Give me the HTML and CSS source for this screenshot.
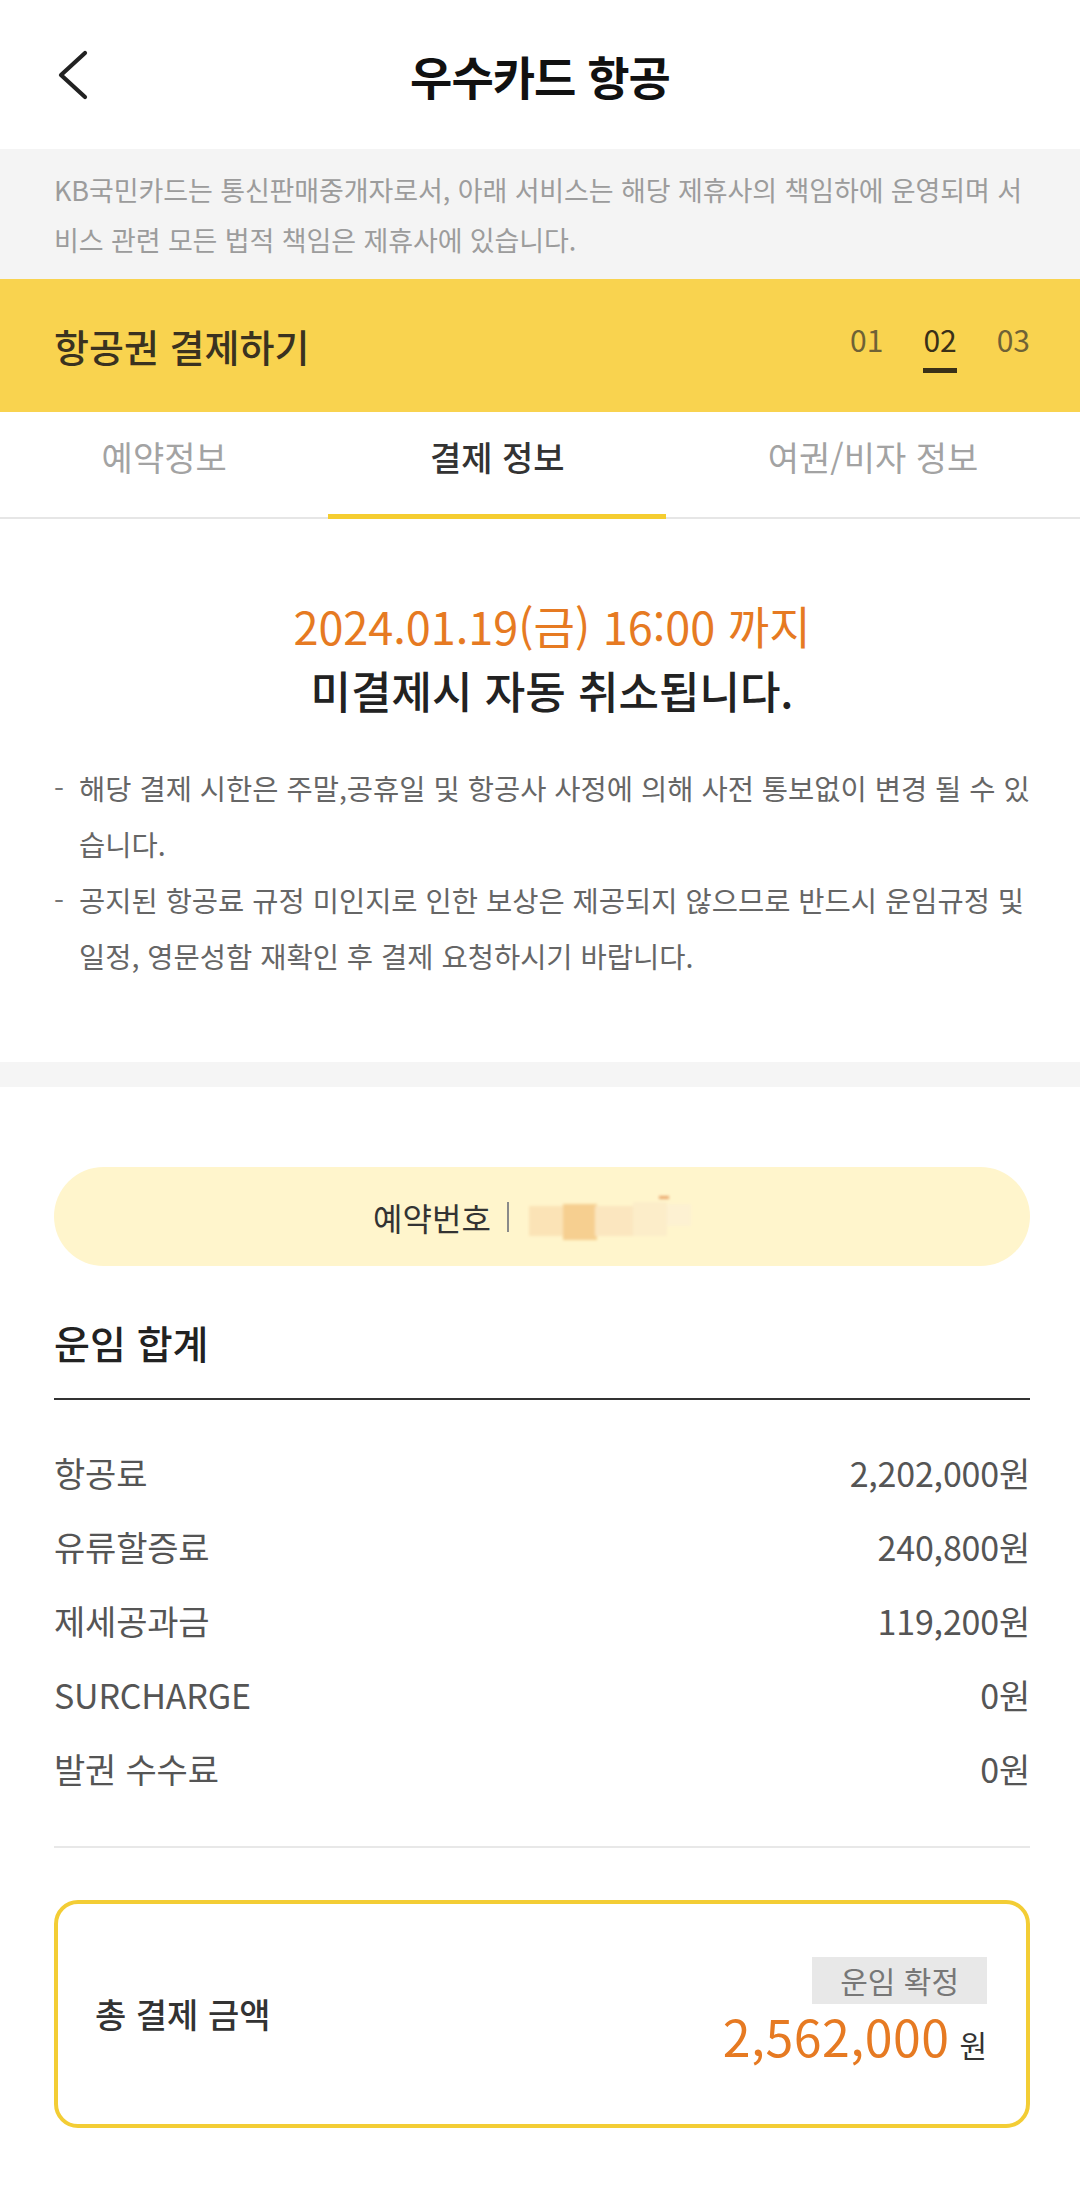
FILE: index.html
```html
<!DOCTYPE html>
<html lang="ko">
<head>
<meta charset="utf-8">
<title>우수카드 항공</title>
<link rel="stylesheet" href="styles.css">
</head>
<body>
<div class="page">
  <header class="topbar">
    <div class="back" aria-label="뒤로">
      <svg width="34" height="54" viewBox="0 0 34 54"><polyline points="29,5 5,27 29,49" fill="none" stroke="#222" stroke-width="4.2" stroke-linecap="round" stroke-linejoin="round"/></svg>
    </div>
    <h1 class="title">우수카드 항공</h1>
    <div class="spacer"></div>
  </header>

  <div class="notice">KB국민카드는 통신판매중개자로서, 아래 서비스는 해당 제휴사의 책임하에 운영되며 서<br>비스 관련 모든 법적 책임은 제휴사에 있습니다.</div>

  <div class="stepbar">
    <h2 class="step-title">항공권 결제하기</h2>
    <ol class="steps">
      <li>01</li>
      <li class="on">02</li>
      <li>03</li>
    </ol>
  </div>

  <nav class="tabs">
    <a class="tab">예약정보</a>
    <a class="tab active">결제 정보</a>
    <a class="tab">여권/비자 정보</a>
  </nav>

  <section class="deadline">
    <p class="dl-date">2024.01.19(금) 16:00 까지</p>
    <p class="dl-msg">미결제시 자동 취소됩니다.</p>
    <ul class="dl-notes">
      <li><span>해당 결제 시한은 주말,공휴일 및 항공사 사정에 의해 사전 통보없이 변경 될 수 있<br>습니다.</span></li>
      <li><span>공지된 항공료 규정 미인지로 인한 보상은 제공되지 않으므로 반드시 운임규정 및<br>일정, 영문성함 재확인 후 결제 요청하시기 바랍니다.</span></li>
    </ul>
  </section>

  <section class="fare">
    <div class="booking">
      <span class="booking-label">예약번호</span>
      <span class="booking-sep"></span>
      <svg class="booking-no" width="190" height="56" viewBox="0 0 190 56">
        <defs><filter id="bl" x="-20%" y="-40%" width="140%" height="180%"><feGaussianBlur stdDeviation="1.6"/></filter></defs>
        <g filter="url(#bl)">
          <rect x="2" y="14" width="36" height="30" fill="#fbe3b6"/>
          <rect x="36" y="12" width="34" height="36" fill="#f6cf90"/>
          <rect x="68" y="14" width="40" height="30" fill="#fbe6bf"/>
          <rect x="106" y="10" width="34" height="34" fill="#fcedc9"/>
          <rect x="132" y="4" width="10" height="3" fill="#e9a56a"/>
          <rect x="140" y="12" width="24" height="22" fill="#fdf1d2"/>
        </g>
      </svg>
    </div>

    <h3 class="fare-title">운임 합계</h3>

    <dl class="fare-list">
      <div class="row"><dt>항공료</dt><dd>2,202,000원</dd></div>
      <div class="row"><dt>유류할증료</dt><dd>240,800원</dd></div>
      <div class="row"><dt>제세공과금</dt><dd>119,200원</dd></div>
      <div class="row"><dt>SURCHARGE</dt><dd>0원</dd></div>
      <div class="row"><dt>발권 수수료</dt><dd>0원</dd></div>
    </dl>

    <div class="total">
      <span class="total-label">총 결제 금액</span>
      <div class="total-right">
        <span class="badge">운임 확정</span>
        <p class="amount"><span class="amount-num">2,562,000</span><span class="amount-unit">원</span></p>
      </div>
    </div>
  </section>
</div>
</body>
</html>
```

FILE: styles.css
```css
* { box-sizing: border-box; }

html, body {
  margin: 0;
  padding: 0;
  background: #ffffff;
}

body {
  font-family: "Noto Sans CJK KR", "Noto Sans", sans-serif;
  color: #222;
}

.page {
  width: 1080px;
}

p, h1, h2, h3, ul, ol, dl, dd { margin: 0; padding: 0; }

/* top bar */
.topbar {
  height: 149px;
  display: grid;
  grid-template-columns: 1fr auto 1fr;
  align-items: center;
}

.back {
  padding-left: 56px;
  display: flex;
  align-items: center;
}

.back svg { display: block; }

.title {
  font-size: 46px;
  font-weight: 700;
  color: #111;
  line-height: 60px;
  letter-spacing: -1px;
}

/* notice */
.notice {
  background: #f4f4f4;
  padding: 16px 30px 14px 54px;
  font-size: 27px;
  line-height: 50px;
  color: #9c9c9c;
  letter-spacing: -0.1px;
  white-space: nowrap;
}

/* step bar */
.stepbar {
  height: 133px;
  background: #f9d34f;
  display: flex;
  align-items: center;
  justify-content: space-between;
  padding: 0 50px 0 54px;
}

.step-title {
  font-size: 38px;
  font-weight: 500;
  color: #3a3220;
  line-height: 46px;
  letter-spacing: 0;
}

.steps {
  list-style: none;
  display: flex;
  gap: 40px;
  align-items: flex-start;
  margin-top: 6px;
}

.steps li {
  font-size: 30px;
  line-height: 30px;
  color: #6f6236;
  padding-bottom: 14px;
  border-bottom: 5px solid transparent;
}

.steps li.on {
  color: #3a3018;
  border-bottom-color: #3a3018;
}

/* tabs */
.tabs {
  display: flex;
  box-shadow: inset 0 -2px 0 #e6e6e6;
}

.tab {
  flex: 1 1 auto;
  text-align: center;
  height: 107px;
  padding-top: 22px;
  font-size: 34px;
  line-height: 46px;
  color: #a3a3a3;
  border-bottom: 5px solid transparent;
}

.tab.active {
  color: #333;
  font-weight: 500;
  border-bottom-color: #f5cd30;
}

/* deadline */
.deadline {
  padding: 75px 30px 78px 54px;
}

.dl-date,
.dl-msg {
  text-align: center;
  line-height: 64px;
}

.dl-date {
  color: #e67a22;
  font-size: 45px;
}

.dl-msg {
  color: #222;
  font-weight: 500;
  font-size: 44px;
}

.dl-notes {
  list-style: none;
  margin-top: 38px;
}

.dl-notes li {
  display: flex;
  font-size: 28.5px;
  line-height: 56px;
  color: #666;
  letter-spacing: 0;
  white-space: nowrap;
}

.dl-notes li::before {
  content: "-";
  flex: 0 0 25px;
  color: #777;
}

/* fare */
.fare {
  border-top: 25px solid #f5f5f5;
  padding: 80px 50px 0 54px;
}

.booking {
  height: 99px;
  border-radius: 50px;
  background: #fff5cc;
  display: flex;
  align-items: center;
  justify-content: center;
  padding-left: 6px;
}

.booking-label {
  font-size: 32px;
  line-height: 40px;
  color: #333;
}

.booking-sep {
  width: 2px;
  height: 30px;
  background: #8a8a8a;
  margin: 0 18px 0 16px;
}

.booking-no {
  display: block;
  margin-top: 6px;
}

.fare-title {
  margin-top: 51px;
  font-size: 39px;
  font-weight: 500;
  line-height: 50px;
  color: #222;
  padding-bottom: 31px;
  border-bottom: 2px solid #333;
}

.fare-list {
  margin-top: 36px;
  padding-bottom: 40px;
  border-bottom: 2px solid #e8e8e8;
}

.row {
  display: flex;
  justify-content: space-between;
  font-size: 34px;
  line-height: 74px;
  color: #555;
  letter-spacing: -0.2px;
}

.row dd { margin: 0; }

/* total */
.total {
  margin-top: 52px;
  height: 228px;
  border: 4px solid #f3cd35;
  border-radius: 24px;
  display: flex;
  align-items: center;
  justify-content: space-between;
  padding: 0 39px 0 37px;
}

.total-label {
  font-size: 34px;
  line-height: 44px;
  color: #333;
  font-weight: 500;
}

.total-right {
  display: flex;
  flex-direction: column;
  align-items: flex-end;
  margin-top: 4px;
}

.badge {
  display: block;
  height: 47px;
  line-height: 47px;
  padding: 0 28px;
  background: #e8e8e8;
  color: #777;
  font-size: 30px;
}

.amount {
  display: flex;
  align-items: baseline;
  line-height: 62px;
}

.amount-num {
  font-size: 50px;
  color: #e67a22;
  letter-spacing: 0.5px;
}

.amount-unit {
  font-size: 30px;
  color: #333;
  margin-left: 10px;
}
```
